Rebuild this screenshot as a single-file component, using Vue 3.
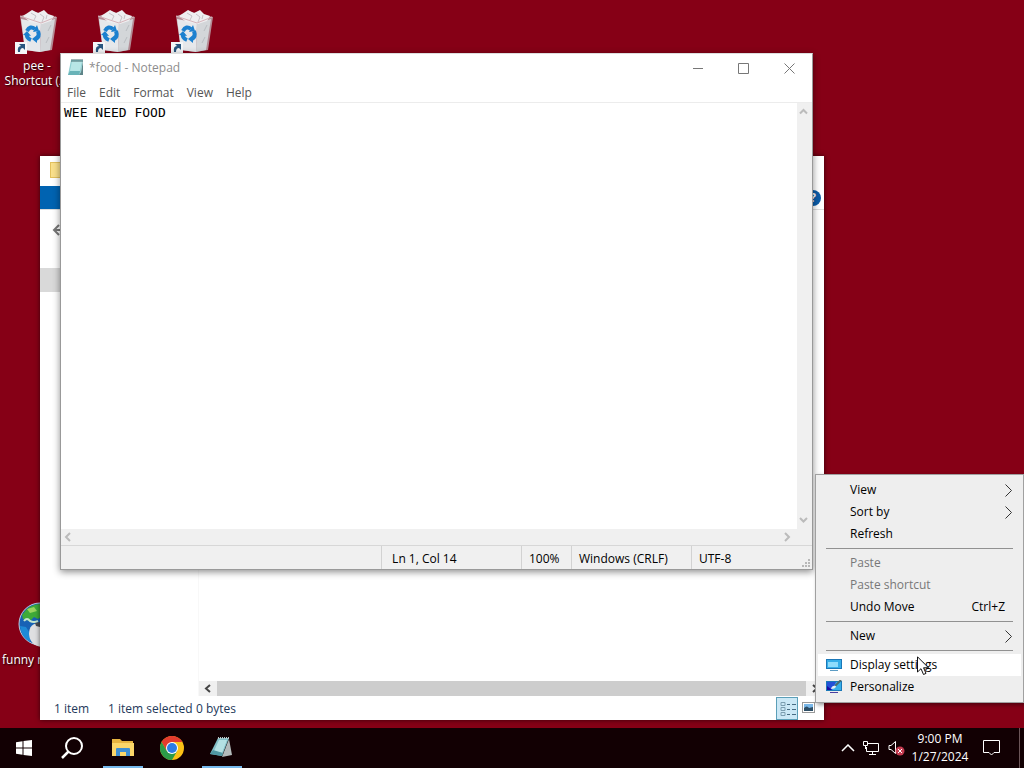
<script setup>
import { ref } from 'vue'

const note = ref('WEE NEED FOOD')
const menus = ['File', 'Edit', 'Format', 'View', 'Help']
const statusCells = [
  { text: '\u00a0Ln 1, Col 14', kind: 'wide' },
  { text: '100%', kind: 'narrow' },
  { text: 'Windows (CRLF)', kind: 'medium' },
  { text: 'UTF-8', kind: 'medium' },
]
const shortcuts = [{ label: 'pee - Shortcut (2)' }, { label: '' }, { label: '' }]
const groups = [
  [
    { label: 'View', sub: true },
    { label: 'Sort by', sub: true },
    { label: 'Refresh' },
  ],
  [
    { label: 'Paste', disabled: true },
    { label: 'Paste shortcut', disabled: true },
    { label: 'Undo Move', key: 'Ctrl+Z' },
  ],
  [{ label: 'New', sub: true }],
  [
    { label: 'Display settings', icon: 'display', active: true },
    { label: 'Personalize', icon: 'personalize' },
  ],
]
</script>

<template>
  <div class="screen">
    <main class="desktop">
      <div class="icons">
        <button v-for="(item, i) in shortcuts" :key="i" class="desk-icon" aria-label="Shortcut">
          <svg width="48" height="48" viewBox="0 0 48 48" aria-hidden="true">
            <path d="M7 9 L22 5 L44 10 L39 43 L26 45 L12 43 Z" fill="#c8c8cc" opacity=".7" />
            <path d="M8 12 L28 16 L27 45 L12 43 Z" fill="#e6e8eb" />
            <path d="M28 16 L42 12 L37 43 L27 45 Z" fill="#d3d6d9" />
            <path d="M10 9 L16 5 L19 3 L25 6 L31 3 L35 7 L41 9 L38 14 L29 17 L17 15 Z" fill="#eeeef0" />
            <path d="M18 6 L23 9 L21 13 M27 7 L31 10 L29 15 M34 8 L33 12" fill="none" stroke="#c6c2c7" />
            <path d="M7 9 L28 16 L43 10" fill="none" stroke="#d5b4ba" />
            <path d="M38 18 L35 24 M36 30 L33 36" fill="none" stroke="#b9bdc1" />
            <g fill="none" stroke="#1c80cf" stroke-width="4">
              <path d="M14 24 Q17 18 22 22" />
              <path d="M25 24 Q27 30 23 32" />
              <path d="M18 33 Q13 31 14 27" />
            </g>
            <path d="M20 25 L26 24 L24 18 Z M24 28 L19 32 L24 36 Z M10 28 L14 24 L18 29 Z" fill="#1c80cf" />
            <rect x="2" y="35" width="12" height="12" fill="#f4f6f8" />
            <path d="M5 45 Q4 39 8 39 L6 37 H12 V43 L10 41 Q7 41 7 45 Z" fill="#28567f" />
          </svg>
          <span>{{ item.label }}</span>
        </button>
      </div>

      <button class="desk-icon globe">
        <svg width="48" height="48" viewBox="0 0 48 48" aria-hidden="true">
          <circle cx="26" cy="23" r="21" fill="#1762b5" stroke="#b9cfe0" />
          <path d="M8 14 Q15 3 26 3 L34 6 L30 14 L24 18 L20 16 L16 20 L9 18 Z" fill="#3faa38" />
          <path d="M13 8 L20 6 L23 10 L16 12 Z" fill="#9ad45d" />
          <path d="M6 25 L12 26 L17 34 L16 41 Q7 36 6 25" fill="#1e8ad6" />
          <path d="M10 20 Q13 16 16 20 Q20 22 24 20" fill="none" stroke="#c4e6cf" stroke-width="2" />
          <path d="M15 33 Q15 22 26 22 H36 V46 H28 Q16 45 15 33" fill="#dfe0e2" />
          <path d="M21 22 L26 21 V26 L22 25 Z" fill="#4a4e55" />
        </svg>
        <span>funny n</span>
      </button>

      <section class="explorer" aria-label="File Explorer">
        <header class="ex-title"><i class="folder"></i></header>
        <div class="ex-ribbon">
          <button class="file-tab" aria-label="File menu"></button>
          <button class="help" aria-label="Open help">?</button>
        </div>
        <div class="ex-address">
          <button aria-label="Back">
            <svg width="14" height="14" viewBox="0 0 14 14"><path d="M7 2 L2 7 L7 12 M2 7 H13" fill="none" stroke="#777" stroke-width="2" /></svg>
          </button>
        </div>
        <div class="ex-body">
          <nav><div class="nav-selected"></div></nav>
          <div class="files">
            <div class="ex-scroll">
              <button aria-label="Scroll left">
                <svg width="18" height="15" viewBox="0 0 18 15"><path d="M11 4 L7 7.500 L11 11" fill="none" stroke="#444" stroke-width="2" /></svg>
              </button>
              <div class="thumb"></div>
              <button aria-label="Scroll right">
                <svg width="18" height="15" viewBox="0 0 18 15"><path d="M7 4 L11 7.500 L7 11" fill="none" stroke="#444" stroke-width="2" /></svg>
              </button>
            </div>
          </div>
        </div>
        <footer class="ex-status">
          <span class="count">1 item</span>
          <span class="selected">1 item selected</span>
          <span>0 bytes</span>
          <div class="views">
            <button class="on" aria-label="Details view">
              <svg width="20" height="21" viewBox="0 0 20 21" fill="none">
                <path d="M4 4.500 H8 V7.500 H4 Z M4 9.500 H8 V12.500 H4 Z M4 14.500 H8 V17.500 H4 Z" stroke="#7c9eb0" />
                <path d="M10 6.500 H13 M15 6.500 H19 M10 11.500 H13 M15 11.500 H19 M10 16.500 H13 M15 16.500 H19" stroke="#476c83" />
              </svg>
            </button>
            <button aria-label="Large icons view">
              <svg width="20" height="21" viewBox="0 0 20 21">
                <rect x="3.500" y="4.500" width="12" height="10" fill="#fff" stroke="#9a9a9a" />
                <rect x="5" y="6" width="9" height="7" fill="#79b7e8" />
                <path d="M5 13 V10 Q8 7 10 10 L14 9 V13 Z" fill="#2d4e66" />
              </svg>
            </button>
          </div>
        </footer>
      </section>

      <section class="notepad" aria-label="Notepad">
        <header class="np-title">
          <svg class="np-icon" width="18" height="18" viewBox="0 0 18 18" aria-hidden="true">
            <path d="M4 1 H16 L14 13 L12 16 H1 Z" fill="#8fcfd2" />
            <path d="M5 2 H15 L13 12 H3 Z" fill="#b7e6e6" />
            <path d="M1 16 L3 12 H13 L12 16 Z" fill="#69b3b8" />
            <path d="M16 2 L14 13 L12 16 H16 Z" fill="#5d8488" />
            <path d="M5 0 V3 M7 0 V3 M9 0 V3 M11 0 V3 M13 0 V3 M15 0 V3" stroke="#476b6e" />
          </svg>
          <h1>*food - Notepad</h1>
          <div class="win-buttons">
            <button aria-label="Minimize"><svg width="11" height="11"><path d="M1 5.500 H11" stroke="#777" /></svg></button>
            <button aria-label="Maximize"><svg width="11" height="11"><path d="M.5 .5 H10.500 V10.500 H.5 Z" fill="none" stroke="#777" /></svg></button>
            <button aria-label="Close"><svg width="11" height="11"><path d="M.5 .5 L10.500 10.500 M10.500 .5 L.5 10.500" stroke="#777" /></svg></button>
          </div>
        </header>
        <nav class="np-menu"><button v-for="m in menus" :key="m">{{ m }}</button></nav>
        <div class="np-edit">
          <textarea v-model="note" aria-label="Text editor" spellcheck="false"></textarea>
          <div class="vbar">
            <button aria-label="Scroll up"><svg width="15" height="17"><path d="M3 10.500 L6.500 7 L10 10.500" fill="none" stroke="#bbb" stroke-width="2" /></svg></button>
            <button aria-label="Scroll down"><svg width="15" height="17"><path d="M3 6 L6.500 9.500 L10 6" fill="none" stroke="#bbb" stroke-width="2" /></svg></button>
          </div>
        </div>
        <div class="hbar">
          <button aria-label="Scroll left"><svg width="17" height="16"><path d="M9 4 L5 8 L9 12" fill="none" stroke="#bbb" stroke-width="2" /></svg></button>
          <button aria-label="Scroll right"><svg width="17" height="16"><path d="M6 4 L10 8 L6 12" fill="none" stroke="#bbb" stroke-width="2" /></svg></button>
        </div>
        <footer class="np-status">
          <span v-for="c in statusCells" :key="c.text" :class="c.kind">{{ c.text }}</span>
          <svg class="grip" width="10" height="10" viewBox="0 0 10 10"><path d="M7 0h2v2h-2z M4 3h2v2h-2z M7 3h2v2h-2z M1 6h2v2h-2z M4 6h2v2h-2z M7 6h2v2h-2z" fill="#b8b8b8" /></svg>
        </footer>
      </section>

      <div class="context" role="menu">
        <div v-for="(group, g) in groups" :key="g" class="group">
          <button
            v-for="item in group"
            :key="item.label"
            role="menuitem"
            :disabled="item.disabled"
            :class="{ active: item.active }"
          >
            <span class="pic">
              <svg v-if="item.icon" width="16" height="14" viewBox="0 0 16 14">
                <rect x=".5" y="1.500" width="15" height="9" fill="#36aee8" stroke="#1b78b8" />
                <template v-if="item.icon === 'display'">
                  <rect x="2" y="4" width="10" height="5" fill="#8fdcfb" />
                  <path d="M4 12.500 H12" stroke="#5c9cc4" />
                </template>
                <template v-else>
                  <path d="M1 2 H10 L6 10 H1 Z" fill="#2450d8" />
                  <path d="M1 6 L6 10 H1 Z" fill="#1b0aa0" />
                  <path d="M15 0 L9 6" stroke="#4d6b70" stroke-width="2" />
                  <path d="M5 9 Q6 5 10 6 Q10 9 5 9" fill="#e6edf2" />
                  <path d="M4 12.500 H12" stroke="#4b3fa0" />
                </template>
              </svg>
            </span>
            <span class="label">{{ item.label }}</span>
            <span v-if="item.key" class="key">{{ item.key }}</span>
            <svg v-if="item.sub" class="chev" width="8" height="13" viewBox="0 0 8 13"><path d="M.5 .5 L6.500 6.500 L.5 12.500" fill="none" stroke="#333" /></svg>
          </button>
        </div>
        <svg class="pointer" width="13" height="20" viewBox="0 0 13 20" aria-hidden="true">
          <path d="M.5 .8 V16 L4 12.700 L6.500 18.500 L9 17.400 L6.600 11.800 H11.500 Z" fill="#fff" stroke="#111" />
        </svg>
      </div>
    </main>

    <footer class="taskbar">
      <button class="task" aria-label="Start">
        <svg width="16" height="16" viewBox="0 0 16 16" fill="#fff"><path d="M0 2.300 L6.500 1.300 V7.500 H0 Z M7.500 1.100 L16 0 V7.500 H7.500 Z M0 8.500 H6.500 V14.700 L0 13.700 Z M7.500 8.500 H16 V16 L7.500 14.900 Z" /></svg>
      </button>
      <button class="task" aria-label="Search">
        <svg width="24" height="24" viewBox="0 0 24 24" fill="none" stroke="#fff" stroke-width="2"><circle cx="13" cy="10" r="8" /><path d="M7.500 15.500 L1 22" stroke-width="2.500" /></svg>
      </button>
      <button class="task open" aria-label="File Explorer">
        <svg width="22" height="20" viewBox="0 0 22 20">
          <path d="M0 1 H8 L10 3 H21 V18 H0 Z" fill="#e7b440" />
          <path d="M0 5 H22 V18 H0 Z" fill="#fbd669" />
          <path d="M4 18 V11 Q4 10 5 10 H17 Q18 10 18 11 V18 H14 V14 H8 V18 Z" fill="#3f8fd2" />
        </svg>
      </button>
      <button class="task" aria-label="Google Chrome">
        <svg width="24" height="24" viewBox="0 0 24 24">
          <circle cx="12" cy="12" r="12" fill="#fbc116" />
          <path d="M12 6 H22.400 A12 12 0 0 0 1.600 6 L6.800 15 Z" fill="#e33b2e" />
          <path d="M1.600 6 A12 12 0 0 0 12 24 L17.200 15 L12 12 L6.800 15 Z" fill="#2c9b48" />
          <circle cx="12" cy="12" r="6" fill="#fff" />
          <circle cx="12" cy="12" r="5" fill="#2d7ce5" />
        </svg>
      </button>
      <button class="task open" aria-label="Notepad">
        <svg width="24" height="24" viewBox="0 0 24 24">
          <path d="M19 3 L22 19 L12 21 Z" fill="#b3babb" />
          <path d="M8 2 H19 L12 20 L0 18 Z" fill="#82bdc5" />
          <path d="M9 4 H17 L12 17 L4 15 Z" fill="#b4e0e3" />
          <path d="M0 18 L3 14 L13 17 L12 20 Z" fill="#4f96a2" />
          <path d="M8 2 H20" stroke="#b9c6c8" stroke-width="2" stroke-dasharray="1 1" />
        </svg>
      </button>
      <div class="tray">
        <button aria-label="Show hidden icons"><svg width="14" height="8" viewBox="0 0 14 8"><path d="M1 7 L7 1 L13 7" fill="none" stroke="#fff" stroke-width="1.500" /></svg></button>
        <button aria-label="Network">
          <svg width="17" height="14" viewBox="0 0 17 14" fill="none" stroke="#fff"><path d="M5 2.500 H15.500 V10.500 H3.500 V6 M9.500 10.500 V13 M6 13.500 H13" /><path d="M.5 .5 H4.500 V4.500 H.5 Z M2.500 5 V8" /></svg>
        </button>
        <button aria-label="Volume muted">
          <svg width="17" height="16" viewBox="0 0 17 16"><path d="M1 5.500 H3 L7.500 1.500 V13.500 L3 9.500 H1 Z" fill="none" stroke="#fff" /><circle cx="12" cy="11" r="4.500" fill="#c33b50" /><path d="M10 9 L14 13 M14 9 L10 13" stroke="#fff" /></svg>
        </button>
      </div>
      <button class="clock"><span>9:00 PM</span><span>1/27/2024</span></button>
      <button class="action" aria-label="Notifications">
        <svg width="17" height="16" viewBox="0 0 17 16"><path d="M.5 .5 H16.500 V12.500 H11 L8.500 15 L6 12.500 H.5 Z" fill="none" stroke="#fff" /></svg>
      </button>
      <button class="peek" aria-label="Show desktop"></button>
    </footer>
  </div>
</template>

<style>
body {
  margin: 0;
}
</style>

<style scoped>
.screen {
  display: flex;
  flex-direction: column;
  height: 100vh;
  overflow: hidden;
  font: 12px/16px "Open Sans", "Noto Sans", sans-serif;
  color: #000;
}
.screen * {
  box-sizing: border-box;
}
button {
  margin: 0;
  padding: 0;
  border: 0;
  background: none;
  font: inherit;
  color: inherit;
}
svg {
  display: block;
  flex: none;
}
.desktop {
  position: relative;
  flex: 1;
  overflow: hidden;
  background: #860016;
}
.icons {
  display: flex;
  align-items: flex-start;
  gap: 4px;
  padding-top: 7px;
}
.desk-icon {
  width: 74px;
  color: #fff;
  line-height: 15px;
  text-shadow: 1px 1px 2px #000;
}
.desk-icon svg {
  margin: 0 auto 3px;
}
.globe {
  position: absolute;
  left: 0;
  bottom: 61px;
  text-align: left;
  padding-left: 2px;
  white-space: nowrap;
}
.explorer {
  position: absolute;
  inset: 156px 200px 8px 40px;
  display: flex;
  flex-direction: column;
  background: #fff;
  box-shadow: 0 0 5px rgba(0, 0, 0, 0.6);
}
.ex-title {
  height: 30px;
  padding: 6px 10px;
}
.folder {
  display: block;
  width: 16px;
  height: 16px;
  background: #fae08c;
  border: 1px solid #e3c15f;
}
.ex-ribbon {
  display: flex;
  justify-content: space-between;
  height: 24px;
  border-bottom: 1px solid #ddd;
}
.file-tab {
  width: 56px;
  background: #0063b1;
}
.help {
  align-self: center;
  width: 16px;
  height: 16px;
  margin-right: 3px;
  border-radius: 8px;
  background: #0b5ca8;
  color: #fff;
  font-weight: bold;
  line-height: 16px;
}
.ex-address {
  display: flex;
  align-items: center;
  height: 40px;
  padding-left: 12px;
}
.ex-body {
  display: flex;
  flex: 1;
}
.ex-body nav {
  width: 159px;
  padding-top: 18px;
  border-right: 1px solid #f8f8f8;
}
.nav-selected {
  height: 24px;
  background: #d9d9d9;
}
.files {
  display: flex;
  flex: 1;
  align-items: flex-end;
}
.ex-scroll {
  display: flex;
  flex: 1;
  height: 15px;
  background: #f0f0f0;
}
.thumb {
  flex: 1;
  background: #cdcdcd;
}
.ex-status {
  display: flex;
  align-items: center;
  height: 24px;
  padding: 1px 4px 0 14px;
  color: #1e395b;
  line-height: 16px;
  white-space: nowrap;
}
.count {
  width: 54px;
}
.selected {
  width: 88px;
}
.views {
  display: flex;
  margin-left: auto;
}
.views button {
  border: 1px solid transparent;
}
.views .on {
  background: #cbe8f6;
  border-color: #5b9fb8;
}
.notepad {
  position: absolute;
  inset: 53px 211px 158px 60px;
  display: flex;
  flex-direction: column;
  background: #fff;
  border: 1px solid #999;
  border-top-color: #ddd;
  box-shadow: 0 2px 7px rgba(0, 0, 0, 0.45);
}
.np-title {
  display: flex;
  align-items: center;
  height: 28px;
  padding-left: 6px;
  color: #8c8c8c;
}
h1 {
  flex: 1;
  margin: 0 0 0 4px;
  font: inherit;
}
.win-buttons {
  display: flex;
  align-self: stretch;
}
.win-buttons button {
  display: grid;
  place-items: center;
  width: 46px;
}
.np-menu {
  display: flex;
  gap: 13px;
  height: 21px;
  padding: 2px 6px 0;
  border-bottom: 1px solid #ececec;
  color: #555;
}
.np-edit {
  display: flex;
  flex: 1;
}
textarea {
  flex: 1;
  padding: 2px 3px;
  border: 0;
  outline: 0;
  resize: none;
  font: 13px/16px "DejaVu Sans Mono", monospace;
  color: #000;
  overflow: hidden;
}
.vbar {
  display: flex;
  flex-direction: column;
  justify-content: space-between;
  background: #f0f0f0;
}
.hbar {
  display: flex;
  justify-content: space-between;
  height: 16px;
  padding-right: 16px;
  background: #f0f0f0;
}
.np-status {
  position: relative;
  display: flex;
  justify-content: flex-end;
  height: 24px;
  padding-right: 1px;
  border-top: 1px solid #d7d7d7;
  background: #f0f0f0;
  line-height: 25px;
}
.np-status span {
  padding-left: 7px;
  border-left: 1px solid #d2d2d2;
}
.np-status .wide {
  width: 140px;
}
.np-status .narrow {
  width: 50px;
}
.np-status .medium {
  width: 120px;
}
.grip {
  position: absolute;
  right: 1px;
  bottom: 0;
}
.context {
  position: absolute;
  right: 0;
  bottom: 25px;
  width: 209px;
  padding: 4px 2px;
  background: #eee;
  border: 1px solid #a0a0a0;
  box-shadow: 2px 2px 4px rgba(0, 0, 0, 0.4);
}
.group + .group::before {
  content: "";
  display: block;
  height: 1px;
  margin: 3px 8px;
  background: #919191;
}
.context button {
  display: flex;
  align-items: center;
  width: 100%;
  height: 22px;
  padding: 0 8px;
  text-align: left;
}
.context .active {
  background: #fff;
}
.context button:disabled {
  color: #787878;
}
.pic {
  width: 24px;
}
.label {
  flex: 1;
}
.key {
  margin-right: 8px;
}
.pointer {
  position: absolute;
  right: 93px;
  bottom: 26px;
}
.taskbar {
  display: flex;
  height: 40px;
  background: #120003;
  color: #fff;
}
.task {
  display: grid;
  place-items: center;
  width: 48px;
  margin-right: 1px;
  border-bottom: 2px solid transparent;
  border-top: 2px solid transparent;
}
.task.open {
  width: 40px;
  margin: 0 5px;
  border-bottom-color: #76b9ed;
}
.tray {
  display: flex;
  align-items: center;
  gap: 8px;
  margin-left: auto;
  padding-right: 8px;
}
.clock {
  display: flex;
  flex-direction: column;
  justify-content: center;
  width: 54px;
  line-height: 18px;
  align-items: center;
}
.action {
  display: grid;
  place-items: center;
  width: 48px;
}
.peek {
  width: 5px;
  margin-left: 4px;
  border-left: 1px solid #6b5558;
}
</style>
